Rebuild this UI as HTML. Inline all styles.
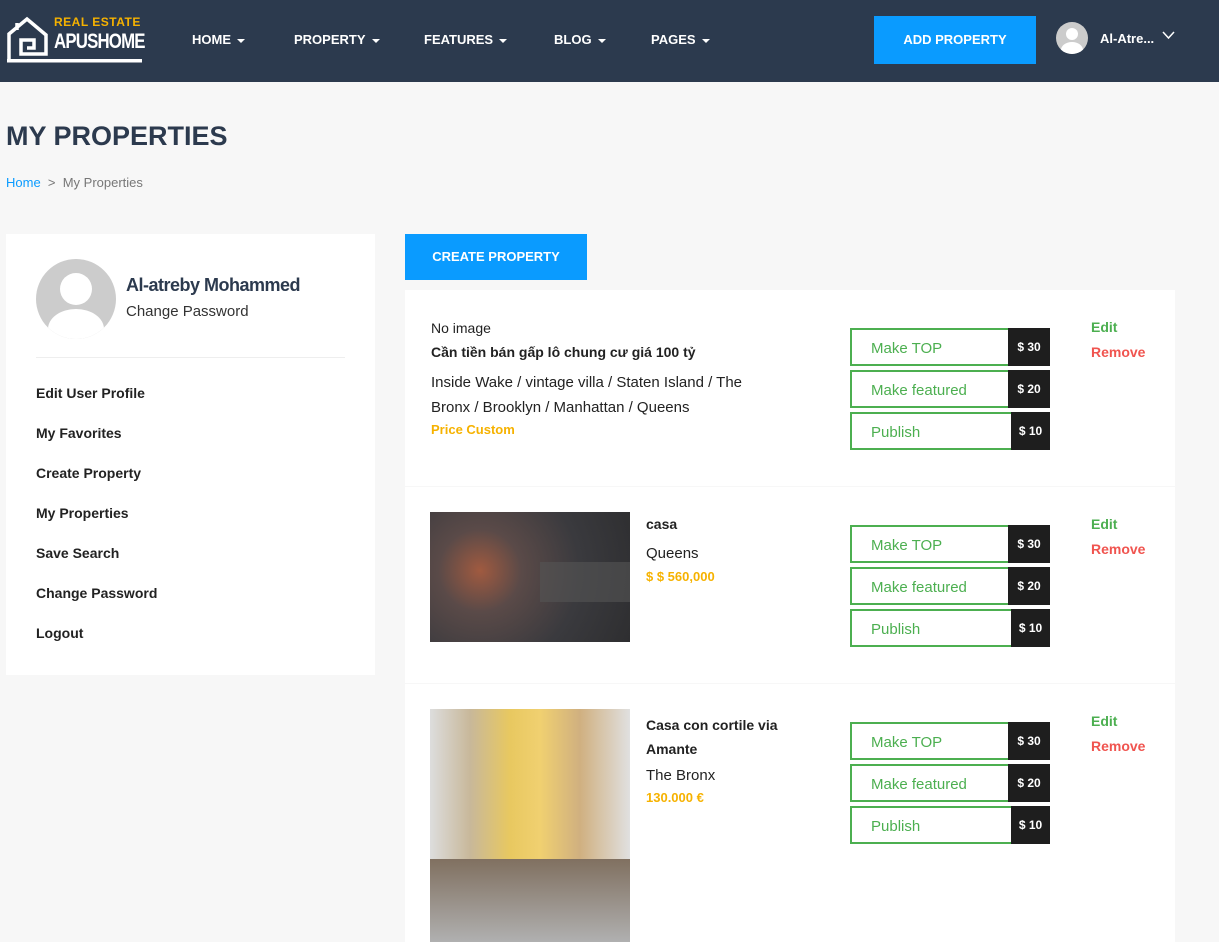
<!DOCTYPE html>
<html><head><meta charset="utf-8"><style>
*{box-sizing:border-box;margin:0;padding:0}
body{width:1219px;height:942px;overflow:hidden;background:#f7f7f7;font-family:"Liberation Sans",sans-serif;color:#222;position:relative}
.hdr{position:absolute;left:0;top:0;width:1219px;height:82px;background:#2c3a4e}
.nav{position:absolute;top:32px;color:#fff;font-weight:bold;font-size:13px}
.nav:after{content:"";display:inline-block;margin-left:6px;border-left:4px solid transparent;border-right:4px solid transparent;border-top:4px solid #fff;vertical-align:middle}
.abs{position:absolute}
.side a{position:absolute;left:36px;font-size:14px;font-weight:bold;color:#222}
.card{position:absolute;left:405px;width:770px;background:#fff}
.btn{position:absolute;left:445px;width:200px;height:38px;border:2px solid #4caf50;color:#4caf50;font-size:15px;line-height:37px;padding-left:19px}
.btn span{position:absolute;right:-2px;top:-2px;height:38px;background:#1e1e1e;color:#fff;font-weight:bold;font-size:12px;line-height:38px;text-align:center}
.ed{position:absolute;left:686px;font-weight:bold;font-size:14px}
.t{position:absolute;font-size:14px}
</style></head><body>
<div class="hdr">
<svg class="abs" style="left:6px;top:14px" width="137" height="50" viewBox="0 0 137 50"><path d="M3 46V20L21 5 40 21V40H15V26H28V34H21" fill="none" stroke="#fff" stroke-width="3.5"/><path d="M11 9v7" stroke="#fff" stroke-width="3.5"/><rect x="1" y="45" width="135" height="3.5" fill="#fff"/></svg>
<div class="abs" style="left:54px;top:15px;color:#f6b200;font-weight:bold;font-size:12px;letter-spacing:.5px">REAL ESTATE</div>
<div class="abs" style="left:54px;top:30px;color:#fff;font-weight:bold;font-size:21px;letter-spacing:-1px;transform:scaleX(.8);transform-origin:left">APUSHOME</div>
<div class="nav" style="left:192px">HOME</div>
<div class="nav" style="left:294px">PROPERTY</div>
<div class="nav" style="left:424px">FEATURES</div>
<div class="nav" style="left:554px">BLOG</div>
<div class="nav" style="left:651px">PAGES</div>
<div class="abs" style="left:874px;top:16px;width:162px;height:48px;background:#0a9bff;color:#fff;font-weight:bold;font-size:13px;text-align:center;line-height:48px">ADD PROPERTY</div>
<div class="abs" style="left:1056px;top:22px;width:32px;height:32px;border-radius:50%;background:#ccc;overflow:hidden"><div class="abs" style="left:10px;top:6px;width:12px;height:12px;border-radius:50%;background:#fff"></div><div class="abs" style="left:5px;top:20px;width:22px;height:16px;border-radius:50%;background:#fff"></div></div>
<div class="abs" style="left:1100px;top:31px;color:#fff;font-weight:bold;font-size:13px">Al-Atre...</div>
<svg class="abs" style="left:1162px;top:31px" width="13" height="9"><path d="M1 1l5.5 6L12 1" fill="none" stroke="#fff" stroke-width="1.5"/></svg>
</div>
<div class="abs" style="left:6px;top:121px;font-size:27px;font-weight:bold;color:#2c3a4e">MY PROPERTIES</div>
<div class="abs" style="left:6px;top:175px;font-size:13px;color:#777"><span style="color:#0a9bff">Home</span> &nbsp;&gt;&nbsp; My Properties</div>
<div class="abs side" style="left:6px;top:234px;width:369px;height:441px;background:#fff">
<div class="abs" style="left:30px;top:25px;width:80px;height:80px;border-radius:50%;background:#ccc;overflow:hidden"><div class="abs" style="left:24px;top:14px;width:32px;height:32px;border-radius:50%;background:#fff"></div><div class="abs" style="left:12px;top:50px;width:56px;height:40px;border-radius:50%;background:#fff"></div></div>
<div class="abs" style="left:120px;top:41px;font-size:18px;font-weight:bold;color:#2c3a4e;letter-spacing:-.5px">Al-atreby Mohammed</div>
<div class="abs" style="left:120px;top:69px;font-size:15px;color:#333">Change Password</div>
<div class="abs" style="left:30px;top:123px;width:309px;border-top:1px solid #eee"></div>
<a style="left:30px;top:151px">Edit User Profile</a>
<a style="left:30px;top:191px">My Favorites</a>
<a style="left:30px;top:231px">Create Property</a>
<a style="left:30px;top:271px">My Properties</a>
<a style="left:30px;top:311px">Save Search</a>
<a style="left:30px;top:351px">Change Password</a>
<a style="left:30px;top:391px">Logout</a>
</div>
<div class="abs" style="left:405px;top:234px;width:182px;height:46px;background:#0a9bff;color:#fff;font-weight:bold;font-size:13px;text-align:center;line-height:46px">CREATE PROPERTY</div>

<div class="card" style="top:290px;height:196px">
<div class="t" style="left:26px;top:30px">No image</div>
<div class="t" style="left:26px;top:54px;font-weight:bold">Cần tiền bán gấp lô chung cư giá 100 tỷ</div>
<div class="t" style="left:26px;top:80px;width:343px;line-height:25px;font-size:15px">Inside Wake / vintage villa / Staten Island / The Bronx / Brooklyn / Manhattan / Queens</div>
<div class="t" style="left:26px;top:132px;color:#f6b200;font-weight:bold;font-size:13px">Price Custom</div>
<div class="btn" style="top:38px">Make TOP<span style="width:42px">$ 30</span></div>
<div class="btn" style="top:80px">Make featured<span style="width:42px">$ 20</span></div>
<div class="btn" style="top:122px">Publish<span style="width:39px">$ 10</span></div>
<div class="ed" style="top:29px;color:#4caf50">Edit</div><div class="ed" style="top:54px;color:#f0544f">Remove</div>
</div>

<div class="card" style="top:487px;height:196px">
<div class="abs" style="left:25px;top:25px;width:200px;height:130px;background:radial-gradient(circle at 25% 45%,#a05a40 0,#5a4a48 25%,#3a3a3e 60%,#2e2e30 100%)"><div class="abs" style="left:110px;top:50px;width:90px;height:40px;background:#555;opacity:.6"></div></div>
<div class="t" style="left:241px;top:29px;font-weight:bold">casa</div>
<div class="t" style="left:241px;top:58px;font-size:15px">Queens</div>
<div class="t" style="left:241px;top:82px;color:#f6b200;font-weight:bold;font-size:13px">$ $ 560,000</div>
<div class="btn" style="top:38px">Make TOP<span style="width:42px">$ 30</span></div>
<div class="btn" style="top:80px">Make featured<span style="width:42px">$ 20</span></div>
<div class="btn" style="top:122px">Publish<span style="width:39px">$ 10</span></div>
<div class="ed" style="top:29px;color:#4caf50">Edit</div><div class="ed" style="top:54px;color:#f0544f">Remove</div>
</div>

<div class="card" style="top:684px;height:258px">
<div class="abs" style="left:25px;top:25px;width:200px;height:233px;background:linear-gradient(90deg,#ddd 0,#c8b89a 20%,#e8c860 40%,#f0d070 55%,#d0b080 75%,#e0e0e0 100%)"><div class="abs" style="left:0;top:150px;width:200px;height:83px;background:linear-gradient(#807060,#b0b0b0)"></div></div>
<div class="t" style="left:241px;top:29px;font-weight:bold;line-height:24px;width:160px">Casa con cortile via Amante</div>
<div class="t" style="left:241px;top:83px;font-size:15px">The Bronx</div>
<div class="t" style="left:241px;top:106px;color:#f6b200;font-weight:bold;font-size:13px">130.000 €</div>
<div class="btn" style="top:38px">Make TOP<span style="width:42px">$ 30</span></div>
<div class="btn" style="top:80px">Make featured<span style="width:42px">$ 20</span></div>
<div class="btn" style="top:122px">Publish<span style="width:39px">$ 10</span></div>
<div class="ed" style="top:29px;color:#4caf50">Edit</div><div class="ed" style="top:54px;color:#f0544f">Remove</div>
</div>
</body></html>
